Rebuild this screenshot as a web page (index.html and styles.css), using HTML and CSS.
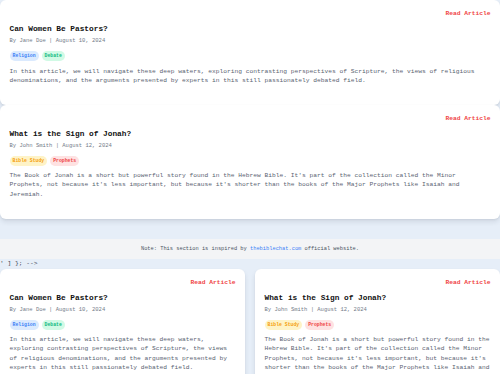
FILE: index.html
```html
<!DOCTYPE html>
<html lang="en">
<head>
<meta charset="utf-8">
<title>Articles</title>
<link rel="stylesheet" href="styles.css">
</head>
<body>
<div class="page">
  <section class="stack">
    <article class="card">
      <a class="read" href="#">Read Article</a>
      <h2 class="title">Can Women Be Pastors?</h2>
      <p class="meta">By Jane Doe | August 10, 2024</p>
      <div class="tags"><span class="tag tag-blue">Religion</span><span class="tag tag-green">Debate</span></div>
      <p class="text">In this article, we will navigate these deep waters, exploring contrasting perspectives of Scripture, the views of religious denominations, and the arguments presented by experts in this still passionately debated field.</p>
    </article>
    <article class="card">
      <a class="read" href="#">Read Article</a>
      <h2 class="title">What is the Sign of Jonah?</h2>
      <p class="meta">By John Smith | August 12, 2024</p>
      <div class="tags"><span class="tag tag-yellow">Bible Study</span><span class="tag tag-red">Prophets</span></div>
      <p class="text">The Book of Jonah is a short but powerful story found in the Hebrew Bible. It's part of the collection called the Minor Prophets, not because it's less important, but because it's shorter than the books of the Major Prophets like Isaiah and Jeremiah.</p>
    </article>
  </section>
  <footer class="note">Note: This section is inspired by <a class="link" href="#">thebiblechat.com</a> official website.</footer>
  <div class="leak">' ] }; --&gt;</div>
  <section class="grid">
    <article class="card">
      <a class="read" href="#">Read Article</a>
      <h2 class="title">Can Women Be Pastors?</h2>
      <p class="meta">By Jane Doe | August 10, 2024</p>
      <div class="tags"><span class="tag tag-blue">Religion</span><span class="tag tag-green">Debate</span></div>
      <p class="text">In this article, we will navigate these deep waters, exploring contrasting perspectives of Scripture, the views of religious denominations, and the arguments presented by experts in this still passionately debated field.</p>
    </article>
    <article class="card">
      <a class="read" href="#">Read Article</a>
      <h2 class="title">What is the Sign of Jonah?</h2>
      <p class="meta">By John Smith | August 12, 2024</p>
      <div class="tags"><span class="tag tag-yellow">Bible Study</span><span class="tag tag-red">Prophets</span></div>
      <p class="text">The Book of Jonah is a short but powerful story found in the Hebrew Bible. It's part of the collection called the Minor Prophets, not because it's less important, but because it's shorter than the books of the Major Prophets like Isaiah and Jeremiah.</p>
    </article>
  </section>
</div>
</body>
</html>
```

FILE: styles.css
```css
html, body {
  margin: 0;
  padding: 0;
  background: #e6eef8;
}
body {
  font-family: "Liberation Mono", "DejaVu Sans Mono", monospace;
  font-size: 6.25px;
  line-height: 1.5;
  color: #5b6472;
  overflow: hidden;
}
.page {
  width: 500px;
}
.stack {
  display: flex;
  flex-direction: column;
}
.card {
  background: #ffffff;
  border-radius: 6px;
  box-shadow: 0 3px 5px rgba(30, 41, 59, 0.10), 0 1px 2px rgba(30, 41, 59, 0.06);
  padding: 9.3px 9.5px 19.3px;
  display: flex;
  flex-direction: column;
}
.read {
  align-self: flex-end;
  color: #ef4444;
  font-weight: bold;
  text-decoration: none;
  font-size: 6.25px;
}
.title {
  margin: 5.45px 0 0;
  font-size: 7.8px;
  line-height: 1.5;
  font-weight: bold;
  color: #111111;
}
.meta {
  margin: 1.3px 0 0;
  font-size: 5.5px;
  color: #737b88;
}
.tags {
  margin-top: 5.9px;
  display: flex;
  gap: 3px;
}
.tag {
  height: 10px;
  line-height: 10px;
  padding: 0 3px;
  border-radius: 5px;
  font-size: 4.8px;
  font-weight: bold;
}
.tag-blue { background: #dbeafe; color: #3b82f6; }
.tag-green { background: #d1fae5; color: #10b981; }
.tag-yellow { background: #fef3c7; color: #f59e0b; }
.tag-red { background: #fee2e2; color: #ef4444; }
.text {
  margin: 5.3px 0 0;
  font-size: 6.25px;
  color: #5b6472;
}
.note {
  margin-top: 20px;
  background: #f3f4f6;
  height: 20px;
  line-height: 20px;
  text-align: center;
  font-size: 5.35px;
  color: #4b5563;
}
.link {
  color: #3b82f6;
  text-decoration: none;
}
.leak {
  height: 10px;
  line-height: 10px;
  font-size: 6.25px;
  color: #374151;
  white-space: pre;
}
.grid {
  display: grid;
  grid-template-columns: 245px 245px;
  gap: 10px;
}
```
